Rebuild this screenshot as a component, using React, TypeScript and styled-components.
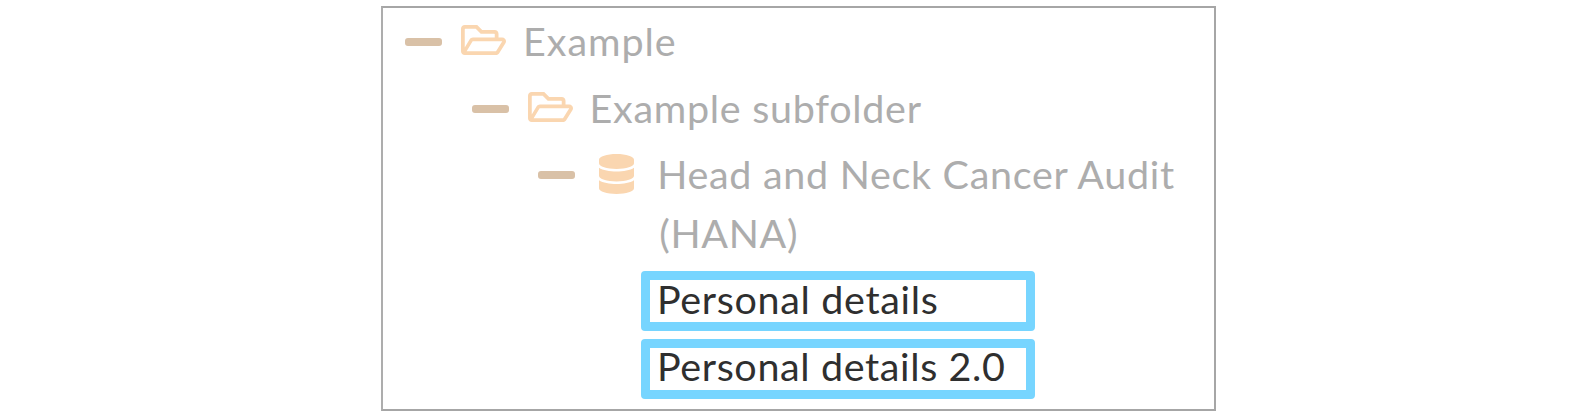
import React from "react";
import styled, { createGlobalStyle } from "styled-components";
import { FaDatabase, FaRegFolderOpen } from "react-icons/fa";

const GlobalStyle = createGlobalStyle`
  * { box-sizing: border-box; }
  body { margin: 0; background: #fff; }
`;

const Page = styled.main`
  display: flex;
  padding: 6px 0 0 381px;
  height: 412px;
  overflow: hidden;
  font-family: Lato, "Liberation Sans", sans-serif;
  font-size: 39.5px;
`;

const Panel = styled.section`
  width: 835px;
  height: 405px;
  border: 2px solid #a6a6a6;
  border-left-color: #adadad;
  padding-top: 3px;
`;

const Row = styled.div<{ $level: number; $height?: number }>`
  display: flex;
  height: ${(p) => p.$height ?? 66.7}px;
  padding-left: ${(p) => 22 + p.$level * 66.6}px;
`;

const Toggle = styled.span`
  flex: none;
  width: 37px;
  height: 8px;
  margin-top: 27px;
  border-radius: 3px;
  background: #d9c1a7;
`;

const IconSlot = styled.span`
  flex: none;
  display: flex;
  justify-content: center;
  width: 45px;
  margin: 9px 0 0 19px;
  height: 40px;
  color: #fad6b0;
`;

const FolderIcon = styled(FaRegFolderOpen)`
  flex: none;
  width: 45px;
  height: 40px;
`;

const DatabaseIcon = styled(FaDatabase)`
  flex: none;
  width: 35px;
  height: 40px;
  margin-top: 0.5px;
`;

const Label = styled.div<{ $spacing: number }>`
  margin: 0 0 0 17px;
  line-height: 59px;
  color: #adadad;
  white-space: nowrap;
  letter-spacing: ${(p) => p.$spacing}px;
`;

const Line = styled.span<{ $indent: number }>`
  display: block;
  padding-left: ${(p) => p.$indent}px;
`;

const Matches = styled.div`
  display: flex;
  flex-direction: column;
  gap: 8px;
  width: 394px;
  margin: 5px 0 0 258px;
`;

const Match = styled.div<{ $spacing: number; $lineHeight: number }>`
  height: 60px;
  padding-left: 7px;
  border: 9px solid #77d5ff;
  border-radius: 4px;
  line-height: ${(p) => p.$lineHeight}px;
  color: #2f2f2f;
  white-space: nowrap;
  letter-spacing: ${(p) => p.$spacing}px;
`;

export default function App() {
  return (
    <>
      <GlobalStyle />
      <Page>
        <Panel>
          <Row $level={0}>
            <Toggle />
            <IconSlot><FolderIcon /></IconSlot>
            <Label $spacing={0.95}>Example</Label>
          </Row>
          <Row $level={1}>
            <Toggle />
            <IconSlot><FolderIcon /></IconSlot>
            <Label $spacing={0.7}>Example subfolder</Label>
          </Row>
          <Row $level={2} $height={122}>
            <Toggle />
            <IconSlot><DatabaseIcon /></IconSlot>
            <Label $spacing={0.7}>
              <Line $indent={1}>Head and Neck Cancer Audit</Line>
              <Line $indent={3}>(HANA)</Line>
            </Label>
          </Row>
          <Matches>
            <Match $spacing={0.66} $lineHeight={38}>Personal details</Match>
            <Match $spacing={0.62} $lineHeight={36}>Personal details 2.0</Match>
          </Matches>
        </Panel>
      </Page>
    </>
  );
}
